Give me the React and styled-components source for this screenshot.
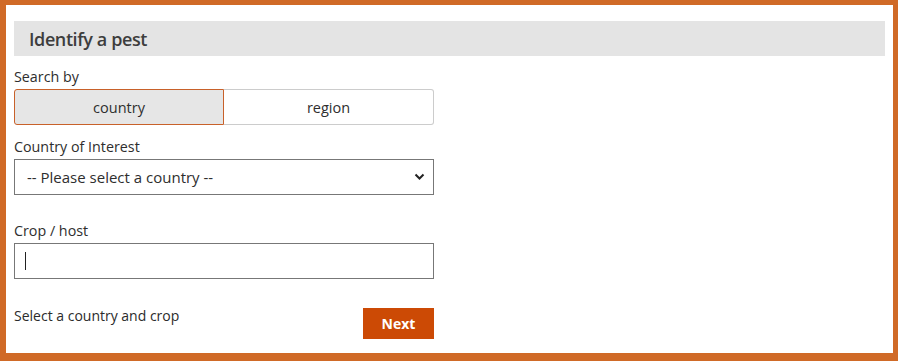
import React, { useState } from 'react';
import styled, { createGlobalStyle } from 'styled-components';

const GlobalStyle = createGlobalStyle`
  html, body {
    margin: 0;
    padding: 0;
    background: #ffffff;
  }
  * {
    box-sizing: border-box;
  }
`;

const Frame = styled.div`
  width: 898px;
  height: 361px;
  border-style: solid;
  border-color: #d06a27;
  border-width: 5px 5px 8px 6px;
  background: #ffffff;
  padding: 16px 8px 0 8px;
  font-family: 'Open Sans', 'Noto Sans', sans-serif;
  color: #333333;
`;

const Header = styled.div`
  height: 35px;
  background: #e4e4e4;
  display: flex;
  align-items: center;
  padding-left: 15px;
  margin-bottom: 11px;
`;

const Title = styled.h2`
  margin: 0;
  font-size: 18px;
  font-weight: 600;
  letter-spacing: -0.4px;
  color: #3d3d3d;
`;

const Form = styled.div`
  width: 420px;
  display: flex;
  flex-direction: column;
`;

const Label = styled.label`
  font-size: 14.3px;
  line-height: 20px;
  color: #2e2e2e;
  margin-bottom: 2px;
`;

const Toggle = styled.div`
  display: grid;
  grid-template-columns: 210px 1fr;
  height: 36px;
  margin-bottom: 12px;
`;

const ToggleButton = styled.button`
  font-family: inherit;
  font-size: 14.5px;
  color: #2e2e2e;
  cursor: pointer;
  background: ${(p) => (p.$active ? '#e6e6e6' : '#ffffff')};
  border: 1px solid ${(p) => (p.$active ? '#c8612a' : '#cccccc')};
  border-left-width: ${(p) => (p.$active ? '1px' : '0')};
  border-radius: ${(p) => (p.$first ? '3px 0 0 3px' : '0 3px 3px 0')};
  padding: 0;
`;

const SelectWrap = styled.div`
  position: relative;
  height: 36px;
  margin-bottom: 26px;
`;

const Select = styled.select`
  appearance: none;
  width: 100%;
  height: 100%;
  border: 1px solid #777777;
  border-radius: 0;
  background: #ffffff;
  font-family: inherit;
  font-size: 15px;
  color: #2e2e2e;
  padding: 0 30px 0 12px;
`;

const Chevron = styled.svg`
  position: absolute;
  right: 9px;
  top: 14px;
  pointer-events: none;
`;

const InputWrap = styled.div`
  position: relative;
  height: 36px;
  margin-bottom: 29px;
`;

const Input = styled.input`
  width: 100%;
  height: 100%;
  border: 1px solid #777777;
  border-radius: 0;
  font-family: inherit;
  font-size: 15px;
  padding: 0 11px;
  outline: none;
`;

const Caret = styled.span`
  position: absolute;
  left: 11px;
  top: 9px;
  width: 1px;
  height: 18px;
  background: #222222;
`;

const Footer = styled.div`
  display: flex;
  justify-content: space-between;
  align-items: flex-start;
`;

const Hint = styled.span`
  font-size: 14px;
  color: #2b2b2b;
  line-height: 16px;
`;

const NextButton = styled.button`
  width: 71px;
  height: 31px;
  background: #cc4a05;
  color: #ffffff;
  border: none;
  font-family: inherit;
  font-size: 14px;
  font-weight: 700;
  cursor: pointer;
`;

export default function App() {
  const [mode, setMode] = useState('country');
  return (
    <>
      <GlobalStyle />
      <Frame>
        <Header>
          <Title>Identify a pest</Title>
        </Header>
        <Form>
          <Label>Search by</Label>
          <Toggle>
            <ToggleButton $first $active={mode === 'country'} onClick={() => setMode('country')}>
              country
            </ToggleButton>
            <ToggleButton $active={mode === 'region'} onClick={() => setMode('region')}>
              region
            </ToggleButton>
          </Toggle>
          <Label>Country of Interest</Label>
          <SelectWrap>
            <Select defaultValue="">
              <option value="">-- Please select a country --</option>
            </Select>
            <Chevron width="11" height="8" viewBox="0 0 11 8">
              <path d="M1.5 1.5 L5.5 5.5 L9.5 1.5" fill="none" stroke="#222" strokeWidth="2" />
            </Chevron>
          </SelectWrap>
          <Label>Crop / host</Label>
          <InputWrap>
            <Input type="text" />
            <Caret />
          </InputWrap>
          <Footer>
            <Hint>Select a country and crop</Hint>
            <NextButton>Next</NextButton>
          </Footer>
        </Form>
      </Frame>
    </>
  );
}
